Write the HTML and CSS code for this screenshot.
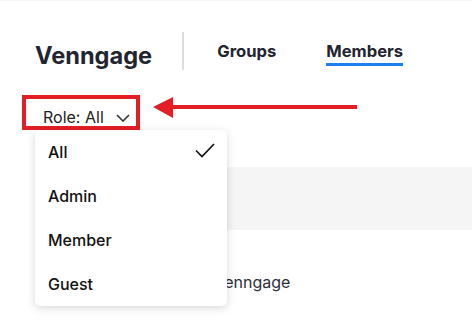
FILE: index.html
```html
<!DOCTYPE html>
<html lang="en">
<head>
    <meta charset="UTF-8">
    <meta name="viewport" content="width=device-width, initial-scale=1.0">
    <title>Venngage - Members</title>
    <link rel="stylesheet" href="styles.css">
</head>
<body>
    <div class="header">
        <div class="logo">Venngage</div>
        <div class="divider"></div>
        <div class="tabs">
            <a class="tab">Groups</a>
            <a class="tab active">Members</a>
        </div>
    </div>

    <div class="toolbar">
        <button class="role-btn">
            Role: All
            <svg class="chevron" width="14" height="8" viewBox="0 0 14 8">
                <path d="M1 1l6 6 6-6" fill="none" stroke="#333" stroke-width="1.6"/>
            </svg>
        </button>

        <svg class="arrow" width="206" height="22" viewBox="0 0 206 22">
            <path d="M204 10H18" stroke="#e31e24" stroke-width="4"/>
            <path d="M0 10L20 0V21Z" fill="#e31e24"/>
        </svg>

        <ul class="menu">
            <li class="menu-item">All
                <svg class="check" width="20" height="15" viewBox="0 0 20 15">
                    <path d="M1 7.5l6 6L19 1" fill="none" stroke="#111" stroke-width="1.7"/>
                </svg>
            </li>
            <li class="menu-item">Admin</li>
            <li class="menu-item">Member</li>
            <li class="menu-item">Guest</li>
        </ul>
    </div>

    <div class="table">
        <div class="table-head"></div>
        <div class="table-row">Venngage</div>
    </div>
</body>
</html>
```

FILE: styles.css
```css
html {
    min-height: 100%;
}
body {
    margin: 0;
    min-height: 330px;
    font-family: Inter, "Noto Sans", sans-serif;
    color: #222;
    background: #fff;
    border-top: 1px solid #f7f7f7;
}
.header {
    display: flex;
    align-items: flex-start;
    height: 38px;
    padding: 31px 0 0 35px;
}
.logo {
    font-size: 23.6px;
    font-weight: 700;
    line-height: 38px;
    margin-top: 5px;
    color: #222530;
}
.divider {
    width: 2px;
    height: 38px;
    background: #dcdcdc;
    margin-left: 30px;
}
.tabs {
    display: flex;
    gap: 50px;
    margin-left: 33px;
    margin-top: 9px;
}
.tab {
    font-size: 16.6px;
    font-weight: 700;
    line-height: 20px;
    color: #222530;
    padding-bottom: 2px;
    border-bottom: 3px solid transparent;
}
.tab.active {
    border-bottom-color: #1a7ff0;
}
.toolbar {
    position: relative;
    margin-top: 25px;
    padding-left: 22px;
    height: 35px;
}
.role-btn {
    display: flex;
    align-items: center;
    gap: 12px;
    height: 35px;
    padding: 8px 6px 0 17px;
    border: 4px solid #e31e24;
    background: #fff;
    font-family: inherit;
    font-size: 16px;
    color: #222;
    box-sizing: border-box;
}
.chevron {
    margin-top: 2px;
}
.arrow {
    position: absolute;
    left: 153px;
    top: 2px;
}
.menu {
    position: absolute;
    left: 35px;
    top: 35px;
    width: 192px;
    margin: 0;
    padding: 0;
    list-style: none;
    background: #fff;
    border-radius: 5px;
    box-shadow: 0 2px 9px rgba(0, 0, 0, 0.16);
    z-index: 2;
}
.menu-item {
    display: flex;
    justify-content: space-between;
    align-items: center;
    height: 44px;
    padding: 0 12px 0 13px;
    font-size: 16px;
    font-weight: 500;
    color: #111;
}
.check {
    margin-top: -3px;
}
.table {
    margin: 37px 0 0 36px;
}
.table-head {
    height: 63px;
    background: #f5f5f5;
}
.table-row {
    padding: 42px 0 0 178px;
    font-size: 16px;
    line-height: 20px;
    color: #2b2f38;
}
```
